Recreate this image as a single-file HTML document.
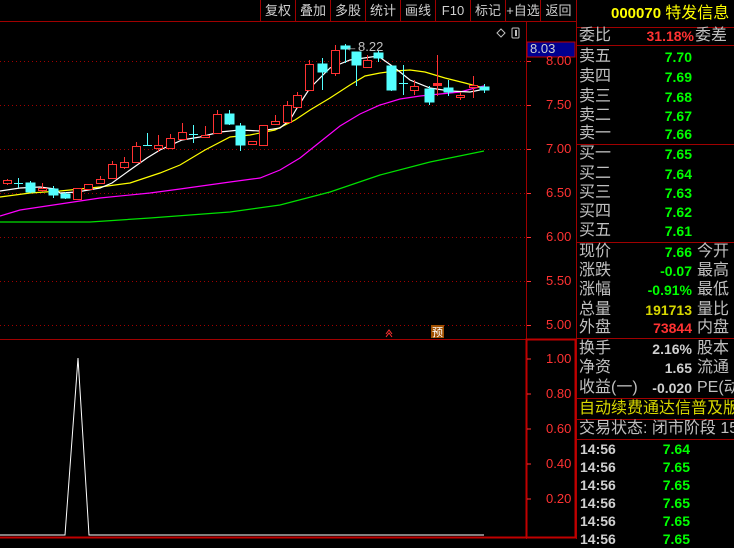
<!DOCTYPE html><html><head><meta charset="utf-8"><style>
body{margin:0;width:734px;height:539px;background:#000;overflow:hidden;font-family:"Liberation Sans","Noto Sans CJK SC",sans-serif;position:relative}
.a{position:absolute;white-space:nowrap;line-height:18px}
.lab{font-size:16px;color:#c0c0c0}
.v{font-size:14px;font-weight:bold;text-align:right}
.g{color:#00ff00}.r{color:#ff3232}.y{color:#d8d800}.w{color:#d0d0d0}
.ax{font-size:13px;color:#ff3232;left:546px}
.tb{position:absolute;top:0;height:21px;font-size:13px;color:#d0d0d0;line-height:22px;text-align:center;border-left:1px solid #a00000}
</style></head><body>
<svg class="a" style="left:0;top:0;line-height:normal" width="734" height="539">
<g stroke="#a00000" fill="none">
<line x1="0" y1="21.5" x2="576" y2="21.5"/>
<line x1="576.5" y1="0" x2="576.5" y2="539"/>
<line x1="526.5" y1="22" x2="526.5" y2="539"/>
<line x1="0" y1="339.5" x2="576" y2="339.5"/>
<rect x="526.5" y="339.5" width="49" height="198" stroke-width="2" stroke="#c00000"/>
<line x1="0" y1="537.5" x2="576" y2="537.5" stroke-width="2" stroke="#c00000"/>
<line x1="577" y1="27.5" x2="734" y2="27.5"/>
<line x1="577" y1="45.5" x2="734" y2="45.5"/>
<line x1="577" y1="144.5" x2="734" y2="144.5"/>
<line x1="577" y1="242.5" x2="734" y2="242.5"/>
<line x1="577" y1="338.5" x2="734" y2="338.5"/>
<line x1="577" y1="398.5" x2="734" y2="398.5"/>
<line x1="577" y1="419.5" x2="734" y2="419.5"/>
<line x1="577" y1="439.5" x2="734" y2="439.5"/>
</g>
<g stroke="#a00000" stroke-dasharray="1,3">
<line x1="0" y1="61.5" x2="526" y2="61.5"/><line x1="0" y1="105.5" x2="526" y2="105.5"/><line x1="0" y1="149.5" x2="526" y2="149.5"/><line x1="0" y1="193.5" x2="526" y2="193.5"/><line x1="0" y1="237.5" x2="526" y2="237.5"/><line x1="0" y1="281.5" x2="526" y2="281.5"/><line x1="0" y1="325.5" x2="526" y2="325.5"/>
</g>
<g stroke="#ff3232"><line x1="527" y1="61.5" x2="531" y2="61.5"/><line x1="527" y1="105.5" x2="531" y2="105.5"/><line x1="527" y1="149.5" x2="531" y2="149.5"/><line x1="527" y1="193.5" x2="531" y2="193.5"/><line x1="527" y1="237.5" x2="531" y2="237.5"/><line x1="527" y1="281.5" x2="531" y2="281.5"/><line x1="527" y1="325.5" x2="531" y2="325.5"/></g>
<rect x="527" y="42" width="48" height="15" fill="#000090" stroke="#c00000"/>
<g fill="none" stroke-width="1.2">
<polyline stroke="#00e000" points="0,222 90,222 150,218 230,212 280,205 330,192 380,175 430,162 484,151"/>
<polyline stroke="#ff00ff" points="0,216 20,210 60,204 100,198 150,193 180,189 230,182 260,178 280,170 300,158 320,142 340,126 360,114 380,105 400,99 420,96 440,94 460,92 475,88 484,86"/>
<polyline stroke="#ffff00" points="0,197 30,193 60,191 100,187 130,183 160,173 180,165 205,150 230,137 250,135 275,130 295,120 310,110 330,98 350,85 365,76 380,73 395,71 410,70 425,72 445,78 465,83 480,87"/>
<polyline stroke="#ffffff" points="0,191 20,188 40,187 55,189 60,193 77,192 100,188 112,183 130,170 147,158 160,150 182,140 200,137 220,132 240,130 260,131 280,128 290,120 297,108 310,88 330,68 350,60 378,56 395,68 410,80 430,88 450,91 470,92 480,90"/>
</g>
<g stroke="#ff3232" fill="#000" stroke-width="1">
<path d="M7.5 179v6M42.5 183v9M100.5 176v8M112.5 161v18M124.5 157v12M136.5 142v21M158.5 135v17M170.5 134v15M182.5 123v17M205.5 126v12M217.5 110v24M252.5 141v4M263.5 125v21M275.5 115v10M287.5 101v22M297.5 92v16M309.5 60v31M335.5 45v31M367.5 55v13M414.5 80v15M437.5 55v41M460.5 92v8M473.5 76v22"/>
<rect x="3.5" y="180.5" width="8" height="3"/><rect x="38.5" y="188.5" width="8" height="2"/><rect x="73.5" y="188.5" width="8" height="11"/><rect x="84.5" y="184.5" width="8" height="5"/><rect x="96.5" y="179.5" width="8" height="4"/><rect x="108.5" y="164.5" width="8" height="14"/><rect x="120.5" y="162.5" width="8" height="5"/><rect x="132.5" y="146.5" width="8" height="16"/><rect x="154.5" y="145.5" width="8" height="3"/><rect x="166.5" y="138.5" width="8" height="10"/><rect x="178.5" y="132.5" width="8" height="7"/><rect x="201.5" y="135.5" width="8" height="2"/><rect x="213.5" y="114.5" width="8" height="19"/><rect x="248.5" y="141.5" width="8" height="3"/><rect x="259.5" y="125.5" width="8" height="20"/><rect x="271.5" y="121.5" width="8" height="3"/><rect x="283.5" y="105.5" width="8" height="17"/><rect x="293.5" y="95.5" width="8" height="12"/><rect x="305.5" y="64.5" width="8" height="26"/><rect x="331.5" y="50.5" width="8" height="23"/><rect x="363.5" y="60.5" width="8" height="7"/><rect x="410.5" y="86.5" width="8" height="4"/><rect x="433.5" y="83.5" width="8" height="2" fill="#ff3232"/><rect x="456.5" y="95.5" width="8" height="2"/><rect x="469.5" y="85.5" width="8" height="2"/>
</g>
<g stroke="#54ffff" fill="#54ffff">
<path d="M18.5 178v10M30.5 181v12M53.5 186v12M65.5 192v7M147.5 133v13M193.5 125v18M229.5 110v15M240.5 123v28M322.5 58v32M345.5 44v19M356.5 65v21M378.5 50v12M391.5 66v25M403.5 65v30M429.5 86v19M448.5 80v16M484.5 84v9"/>
<path d="M14 183.5h9M143 145.5h9M189 134.5h9M399 83.5h9" />
<rect x="26" y="183" width="9" height="9"/><rect x="49" y="189" width="9" height="6"/><rect x="61" y="194" width="9" height="4"/><rect x="225" y="114" width="9" height="10"/><rect x="236" y="126" width="9" height="19"/><rect x="318" y="64" width="9" height="8"/><rect x="341" y="46" width="9" height="3"/><rect x="352" y="52" width="9" height="13"/><rect x="374" y="53" width="9" height="5"/><rect x="387" y="66" width="9" height="24"/><rect x="425" y="89" width="9" height="13"/><rect x="444" y="88" width="9" height="4"/><rect x="480" y="87" width="9" height="3"/>
</g>
<text x="345" y="51" fill="#c0c0c0" font-size="13" font-family="Liberation Sans">←8.22</text>
<path d="M497 33l4-4 4 4-4 4z" fill="none" stroke="#c0c0c0"/>
<rect x="512" y="28" width="7" height="10" fill="none" stroke="#c0c0c0" rx="1"/><rect x="515" y="30" width="2" height="6" fill="#c0c0c0"/>
<path d="M386 334l3-4 3 4M386 337l3-4 3 4" fill="none" stroke="#ff3232"/>
<rect x="431" y="325" width="13" height="13" fill="#a05000"/><text x="432" y="336" font-size="11" fill="#fff" font-family="Noto Sans CJK SC">预</text>
<polyline fill="none" stroke="#fff" points="0,535 65,535 78,358 89,535 484,535"/>
<g stroke="#ff3232"><line x1="527" y1="359" x2="531" y2="359"/><line x1="527" y1="394" x2="531" y2="394"/><line x1="527" y1="429" x2="531" y2="429"/><line x1="527" y1="464" x2="531" y2="464"/><line x1="527" y1="499" x2="531" y2="499"/></g>
</svg>
<div class="tb" style="left:260px;width:34px">复权</div><div class="tb" style="left:295px;width:34px">叠加</div><div class="tb" style="left:330px;width:34px">多股</div><div class="tb" style="left:365px;width:34px">统计</div><div class="tb" style="left:400px;width:34px">画线</div><div class="tb" style="left:435px;width:34px">F10</div><div class="tb" style="left:470px;width:34px">标记</div><div class="tb" style="left:505px;width:34px">+自选</div><div class="tb" style="left:540px;width:35px">返回</div>
<div class="a ax" style="top:52px">8.00</div><div class="a ax" style="top:96px">7.50</div><div class="a ax" style="top:140px">7.00</div><div class="a ax" style="top:184px">6.50</div><div class="a ax" style="top:228px">6.00</div><div class="a ax" style="top:272px">5.50</div><div class="a ax" style="top:316px">5.00</div>
<div class="a" style="left:530px;top:40px;font-size:13px;color:#d0d0d0">8.03</div>
<div class="a ax" style="top:350px">1.00</div><div class="a ax" style="top:385px">0.80</div><div class="a ax" style="top:420px">0.60</div><div class="a ax" style="top:455px">0.40</div><div class="a ax" style="top:490px">0.20</div>
<div class="a" style="left:611px;top:5px;font-size:15px;font-weight:bold;color:#ffff00">000070 <span style="font-weight:normal;font-size:16px">特发信息</span></div>
<div class="a lab" style="left:579px;top:27px">委比</div><div class="a v r" style="left:610px;width:84px;top:27px">31.18%</div><div class="a lab" style="left:695px;top:27px">委差</div>
<div id="ob"></div>
<script>
var rows=[["卖五","7.70",48],["卖四","7.69",68],["卖三","7.68",88],["卖二","7.67",107],["卖一","7.66",125],["买一","7.65",145],["买二","7.64",165],["买三","7.63",184],["买四","7.62",203],["买五","7.61",222]];
var h="";rows.forEach(function(r){h+='<div class="a lab" style="left:579px;top:'+r[2]+'px">'+r[0]+'</div><div class="a v g" style="left:610px;width:82px;top:'+r[2]+'px">'+r[1]+'</div>';});
var q=[["现价","7.66","g","今开",243],["涨跌","-0.07","g","最高",262],["涨幅","-0.91%","g","最低",281],["总量","191713","y","量比",301],["外盘","73844","r","内盘",319],["换手","2.16%","w","股本",340],["净资","1.65","w","流通",359],["收益(一)","-0.020","w","PE(动",379]];
q.forEach(function(r){h+='<div class="a lab" style="left:579px;top:'+r[4]+'px">'+r[0]+'</div><div class="a v '+r[2]+'" style="left:610px;width:82px;top:'+r[4]+'px">'+r[1]+'</div><div class="a lab" style="left:697px;top:'+r[4]+'px">'+r[3]+'</div>';});
h+='<div class="a" style="left:579px;top:400px;font-size:16px;color:#d8d800">自动续费通达信普及版</div><div class="a lab" style="left:579px;top:420px">交易状态: 闭市阶段 15</div>';
[440,458,476,494,512,530].forEach(function(t,i){h+='<div class="a v w" style="left:580px;top:'+t+'px">14:56</div><div class="a v g" style="left:630px;width:60px;top:'+t+'px">'+(i==0?"7.64":"7.65")+'</div>';});
document.getElementById("ob").innerHTML=h;
</script>
</body></html>
